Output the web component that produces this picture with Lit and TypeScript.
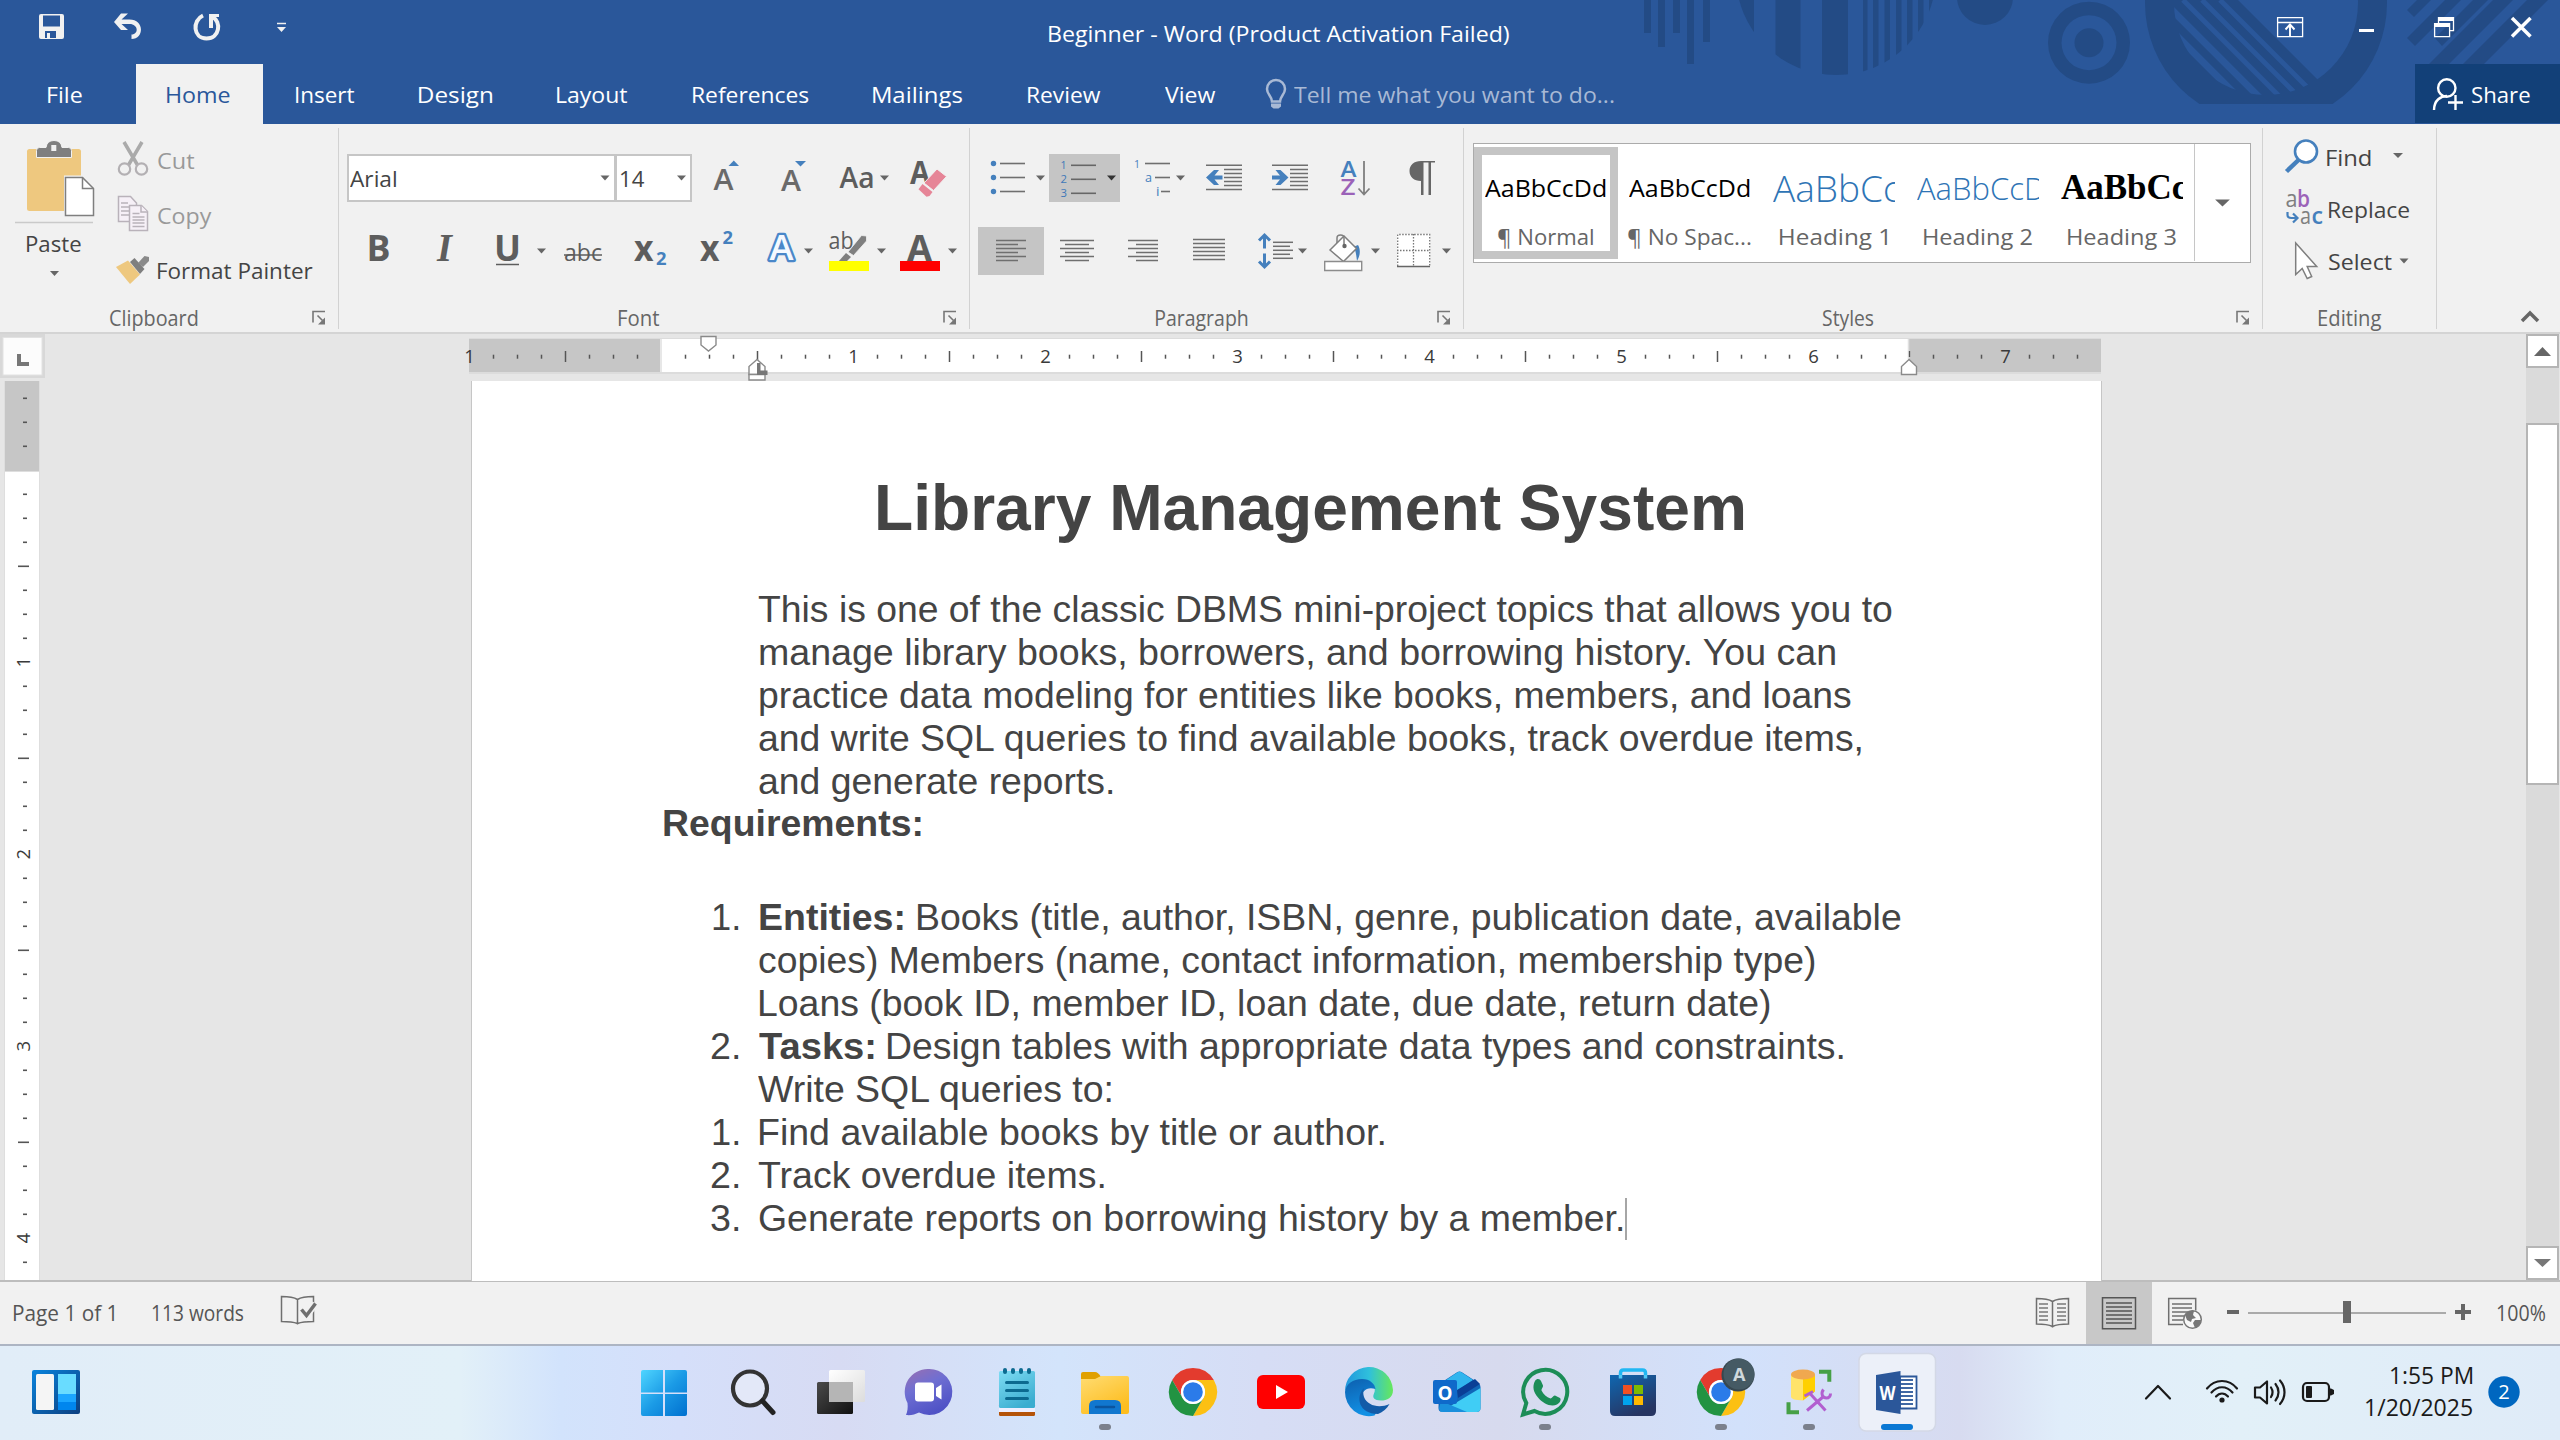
import { LitElement, html, svg, css } from "lit";
import { customElement, property } from "lit/decorators.js";

/* Text whose inked width is fixed, whatever the metrics of the face in use. */
@customElement("fit-text")
class FitText extends LitElement {
  @property({ type: Number }) w = 0;
  @property({ type: Number }) gap = 0;
  @property() text = "";

  static styles = css`
    :host { display: inline-block; white-space: pre; flex: none; }
    .ink { display: inline-block; position: relative; top: var(--drop, 1px); transform-origin: 0 50%; }
  `;

  updated() {
    const span = this.renderRoot.querySelector(".ink") as HTMLElement;
    const cs = getComputedStyle(span);
    const ctx = document.createElement("canvas").getContext("2d")!;
    ctx.font = `${cs.fontStyle} ${cs.fontWeight} ${cs.fontSize} ${cs.fontFamily}`;
    const m = ctx.measureText(this.text);
    const ink = m.actualBoundingBoxRight + m.actualBoundingBoxLeft;
    const k = ink > 0 ? this.w / ink : 1;
    span.style.transform = `translateX(${m.actualBoundingBoxLeft * k}px) scaleX(${k})`;
    this.style.width = `${this.w}px`;
    this.style.marginLeft = `${this.gap}px`;
  }

  render() {
    return html`<span class="ink">${this.text}</span>`;
  }
}

const fit = (text: string, w: number, gap = 0, cls = "") =>
  html`<fit-text class=${cls} .text=${text} .w=${w} .gap=${gap}></fit-text>`;

/* An SVG tile that shows the window region x,y,w,h; drawings use window coordinates. */
const tile = (x: number, y: number, w: number, h: number, body: unknown, cls = "") =>
  html`<svg class="tile ${cls}" width=${w} height=${h} viewBox="${x} ${y} ${w} ${h}">${body}</svg>`;

const tri = (x: number, y: number, w = 9, h = 5, c = "#666") =>
  svg`<path d="M${x} ${y}h${w}l${-w / 2} ${h}z" fill=${c} />`;

const glyph = (s: string, x: number, base: number, size: number, w: number, c = "#5d5d5d", cls = "") =>
  svg`<text class=${cls} x=${x} y=${base} font-size=${size} textLength=${w} lengthAdjust="spacingAndGlyphs" fill=${c}>${s}</text>`;

const lines = (segs: number[][], c = "#777", sw = 2) =>
  segs.map(([x1, x2, y]) => svg`<path d="M${x1} ${y}H${x2}" stroke=${c} stroke-width=${sw} />`);

const BLUE = "#4580bd";

const launcher = html`<svg class="tile" width="30" height="23" viewBox="308 305.5 30 23">
  <path d="M313 322v-11h12" fill="none" stroke="#777" stroke-width="1.6" />
  <path d="M317.5 315l5 5" stroke="#777" stroke-width="1.6" /><path d="M325 317v7h-7z" fill="#777" />
</svg>`;

const chrome = (cx: number, cy: number) => svg`<g transform="translate(${cx} ${cy})">
  <path d="M-20.8-12A24 24 0 0 1 20.8-12H0A12 12 0 0 0-10.4 6z" fill="#e33b2e" />
  <path d="M20.8-12A24 24 0 0 1 0 24L10.4 6A12 12 0 0 0 0-12z" fill="#fcc013" />
  <path d="M0 24A24 24 0 0 1-20.8-12L-10.4 6A12 12 0 0 0 10.4 6z" fill="#229342" />
  <circle r="12" fill="#fff" /><circle r="9.8" fill="#2b7be9" /></g>`;

const dot = (cx: number) => svg`<rect x=${cx - 6} y="1424" width="12" height="6" rx="3" fill="#7b808c" />`;

const samples = [
  { cls: "s-body", label: "¶ Normal", w: 95, sample: "AaBbCcDd" },
  { cls: "s-body", label: "¶ No Spac...", w: 123, sample: "AaBbCcDd" },
  { cls: "s-h1", label: "Heading 1", w: 107, sample: "AaBbCc" },
  { cls: "s-h2", label: "Heading 2", w: 108, sample: "AaBbCcD" },
  { cls: "s-h3", label: "Heading 3", w: 108, sample: "AaBbCc" },
];

const tabs: [string, number, number][] = [
  ["Insert", 58.5, 33], ["Design", 73, 65], ["Layout", 70.5, 65], ["References", 115.5, 65],
  ["Mailings", 89, 65], ["Review", 73, 65.5], ["View", 51, 64.5],
];

type Run = [string, number, number, boolean?];
const intro: Run[] = [
  ["This is one of the classic DBMS mini-project topics that allows you to", 1134, 758],
  ["manage library books, borrowers, and borrowing history. You can", 1076, 759.5],
  ["practice data modeling for entities like books, members, and loans", 1091, 760],
  ["and write SQL queries to find available books, track overdue items,", 1104, 759],
  ["and generate reports.", 353, 758.5],
];
const list: { n?: string; runs: Run[]; caret?: boolean }[] = [
  { n: "1.", runs: [["Entities:", 142.5, 759.5, true], ["Books (title, author, ISBN, genre, publication date, available", 983, 917.5]] },
  { runs: [["copies) Members (name, contact information, membership type)", 1056, 759]] },
  { runs: [["Loans (book ID, member ID, loan date, due date, return date)", 1010, 760]] },
  { n: "2.", runs: [["Tasks:", 114.5, 758.5, true], ["Design tables with appropriate data types and constraints.", 954.5, 888]] },
  { runs: [["Write SQL queries to:", 354, 757.5]] },
  { n: "1.", runs: [["Find available books by title or author.", 623.5, 760]] },
  { n: "2.", runs: [["Track overdue items.", 345.5, 757.5]] },
  { n: "3.", runs: [["Generate reports on borrowing history by a member.", 863, 758.5]], caret: true },
];

@customElement("app-root")
class AppRoot extends LitElement {
  static styles = css`
    :host { display: block; width: 2560px; height: 1440px; overflow: hidden; background: #e6e6e6;
      font-family: "Open Sans", "Noto Sans", sans-serif; font-size: 22.5px; color: #444; }
    * { box-sizing: border-box; }
    .tile { display: block; flex: none; }
    .tile text { font-family: "Open Sans", "Noto Sans", sans-serif; }
    .tile .b { font-weight: 700; }
    .tile .sb { font-weight: 600; }
    .tile .it { font-family: "Liberation Serif", serif; font-style: italic; font-weight: 700; }
    .grow { flex: 1; }

    .header { position: relative; height: 124px; background: #2a579a; color: #fff; }
    .decor { position: absolute; right: 0; top: 0; }
    .title-row { position: relative; display: flex; height: 64px; }
    .title-row fit-text { line-height: 66px; }
    .tab-row { position: relative; display: flex; height: 60px; line-height: 60px; }
    .tab-home { width: 127px; height: 60px; background: #f1f1f1; color: #2a579a; margin-left: 54px; }
    .tell { color: #a8b9d5; }
    .share { display: flex; width: 145px; height: 59px; background: #124078; }

    .ribbon { display: flex; height: 210px; background: #f1f1f1; border-bottom: 2px solid #d4d4d4; }
    .group { display: flex; flex-direction: column; height: 201px; margin-top: 4px; border-right: 1.5px solid #d2d2d2; }
    .g-clip { width: 339px; } .g-font { width: 631px; } .g-para { width: 494px; }
    .g-styles { width: 799px; } .g-edit { width: 174px; }
    .body { height: 178px; }
    .foot { display: flex; height: 23px; line-height: 23px; font-size: 21px; color: #666; }
    .foot .name { flex: 1; text-align: center; }
    .clip-body { display: flex; }
    .paste { width: 108px; }
    .paste-name { display: block; height: 36px; line-height: 36px; }
    .clip-list { padding-top: 4px; line-height: 55px; }
    .cmd { display: flex; }
    .row { display: flex; height: 66px; }
    .dim { color: #999; }
    .rows { padding-top: 17px; display: flex; flex-direction: column; gap: 7px; }
    .font-rows { padding-left: 8px; }
    .combo { display: flex; align-items: center; height: 48px; margin-top: 9px; background: #fff; border: 2px solid #c6c6c6; line-height: 44px; }
    .c-name { width: 269px; } .c-size { width: 76px; border-left: 1px solid #c6c6c6; }

    .gallery { display: flex; width: 778px; height: 120px; margin: 15px 0 0 9px; background: #fff; border: 1.5px solid #ababab; }
    .card { width: 144px; height: 112px; margin-top: 3px; border: 8px solid transparent; padding-left: 3px; }
    .card.on { border-color: #c5c5c5; }
    .sample { height: 66px; line-height: 66px; width: 122px; overflow: hidden; white-space: nowrap; color: #000; font-size: 24px; --drop: 0px; }
    .s-h1 { font-size: 37px; font-weight: 300; color: #2e74b5; }
    .s-h2 { font-size: 31px; font-weight: 300; color: #2e74b5; }
    .s-h3 { font-family: "Liberation Serif", serif; font-weight: 700; font-size: 35px; }
    .style-name { height: 30px; line-height: 30px; text-align: center; color: #666; margin-left: -5px; }
    .more { border-left: 1.5px solid #c6c6c6; }
    .edit-list { padding-top: 3px; line-height: 52px; }
    .tail { display: flex; flex: 1; justify-content: flex-end; align-items: flex-end; }

    .work { display: flex; height: 946px; background: #e6e6e6; }
    .left { width: 45px; }
    .main { width: 2481px; }
    .page { width: 1631px; height: 900px; margin-left: 426px; background: #fff; border: solid #c6c6c6; border-width: 0 1.5px;
      font-family: "Liberation Sans", Arial, sans-serif; font-size: 37.33px; line-height: 43px; padding-top: 90px; color: #444; }
    .h { font-size: 64px; font-weight: 700; line-height: 74px; height: 74px; margin-bottom: 42px; --drop: 0px; }
    .ln { display: flex; height: 43px; }
    .bold { font-weight: 700; }
    .req { margin-bottom: 50px; --drop: 0px; }
    .caret { width: 2px; height: 42px; margin: 2px 0 0 3px; background: #a6a6a6; }

    .scroll { display: flex; flex-direction: column; width: 34px; background: #dadada; border-right: 1px solid #e6e6e6; }
    .sb { background: #fff; border: 2px solid #b5b5b5; height: 34px; }
    .sb-thumb { height: 362px; margin-top: 55px; }

    .status { display: flex; height: 64px; background: #f1f1f1; border-top: 2px solid #bdbdbd; line-height: 63px; font-size: 21px; color: #555; --drop: 0px; }
    .view-on { background: #c8c8c8; }
    .edge { width: 15px; }
    .taskbar { display: flex; height: 96px; border-top: 2px solid #adb5c3;
      background: linear-gradient(90deg, #e1edf8 0, #e2f0f8 460px, #d2e3fc 560px, #d5dffa 680px, #d7dbf3 840px, #d3e4fb 1060px, #d6ddf5 1260px, #d7daee 1500px, #d2e1fb 1740px, #d7dbf0 1960px, #e0edfa 2060px, #e2f0f8 2240px, #dfebf8 2560px); }
    .clock { width: 106px; padding-top: 13px; line-height: 32px; font-size: 23px; color: #1a1a1a; height: 80px; --drop: 0px; }
    .clock-line { display: flex; justify-content: flex-end; height: 32px; }
  `;

  header() {
    const D = "#234b85";
    return html`<div class="header">
      <svg class="decor" width="940" height="124" viewBox="1620 0 940 124" fill=${D}>
        <path d="M1644 0h7v33h-7zM1658 0h7v47h-7zM1673 0h7v33h-7zM1687 0h7v64h-7zM1703 0h7v42h-7z" />
        <clipPath id="c1"><circle cx="1836" cy="-25" r="100" /></clipPath>
        <g clip-path="url(#c1)">
          <path d="M1720 0h34v60h-34zM1775.5 0h25v80h-25zM1822 0h26v80h-26zM1863 0h4.500v80h-4.500zM1873 0h5.500v80h-5.500zM1884.500 0h5.500v80h-5.500zM1896 0h5.500v80h-5.500zM1907 0h5.500v80h-5.500zM1918 0h5.500v80h-5.500zM1929 0h6v80h-6z" />
        </g>
        <circle cx="1985" cy="-3" r="28" />
        <path fill-rule="evenodd" d="M2048 42.700a41 41 0 1 0 82 0a41 41 0 1 0-82 0M2061.500 42.700a27.500 27.500 0 1 0 55 0a27.500 27.500 0 1 0-55 0" />
        <circle cx="2089" cy="42.700" r="14.500" />
        <clipPath id="c2"><path d="M2130 0h270v104h-270z" /></clipPath>
        <clipPath id="c3"><circle cx="2266" cy="3" r="92" /></clipPath>
        <g clip-path="url(#c2)">
          <circle cx="2266" cy="3" r="121" />
          <g clip-path="url(#c3)">
            <path d="M2238 0L2362 124H2400V0z" fill="#2a579a" />
            <path d="M2220 0l124 124M2202 0l124 124M2183 0l124 124" stroke="#2a579a" stroke-width="5" fill="none" />
            <path d="M2162 0l124 124M2141 0l124 124" stroke="#2a579a" stroke-width="7" fill="none" />
          </g>
        </g>
        <path d="M2407 10l10-10h14l-17 17zM2407 38l38-38h16l-46 46zM2435 38l38-38h15l-46 46zM2429 64l64-64h20l-64 64zM2463 64l64-64h21l-64 64z" />
      </svg>
      <div class="title-row">
        ${tile(0, 0, 1049, 64, svg`
          <path fill="#f1f1f1" fill-rule="evenodd" d="M41 14h21a2 2 0 0 1 2 2v21a2 2 0 0 1-2 2H41a2 2 0 0 1-2-2V16a2 2 0 0 1 2-2zM43 15.500v11h17v-11zM45 31v7h2v-5h3v5h6v-7z" />
          <path d="M121 13.500h7l-6.500 6h8c15 0 15 19.500 2 19.500v-4.500c7.500 0 7-10.500-2-10.500h-8l6.500 6h-7l-7-8z" fill="#f1f1f1" />
          <path d="M203 15.500c-11 5-10 23 3.500 23s15-17 6-21.500" fill="none" stroke="#f1f1f1" stroke-width="4" />
          <path d="M209 14h10v3h-6v11h-4z" fill="#f1f1f1" />
          <path d="M277 23.500h9" stroke="#f1f1f1" stroke-width="1.500" />${tri(277, 27, 9, 5, "#f1f1f1")}`)}
        ${fit("Beginner - Word (Product Activation Failed)", 460, 0.2)}
        <span class="grow"></span>
        ${tile(2260, 0, 300, 64, svg`
          <g fill="none" stroke="#fff" stroke-width="1.300"><path d="M2277.600 17.600h25v19h-25zM2277.600 22.500h25" /><path d="M2290 36V25M2285.500 29.500l4.500-5 4.500 5" stroke-width="1.900" />
          <path d="M2434.600 23.600h15v13h-15zM2438.500 23v-5.400h15v13h-3.500" /></g>
          <path d="M2359 29h15v3h-15zM2434 23h16v4h-16zM2438 17h16v4h-16z" fill="#fff" />
          <path d="M2512 18l18.500 18.500M2530.500 18L2512 36.500" stroke="#fff" stroke-width="3.500" />`)}
      </div>
      <div class="tab-row">
        ${fit("File", 34, 47.5)}
        <div class="tab-home">${fit("Home", 63, 31.5)}</div>
        ${tabs.map(([t, w, g]) => fit(t, w, g))}
        ${tile(1215, 64, 79, 60, svg`
          <path d="M1271 101.500c0-5-5-7-5-12.500a9 9 0 0 1 18 0c0 5.500-5 7.500-5 12.500z" fill="none" stroke="#a8b9d5" stroke-width="2.500" />
          <path d="M1270 103.500h10v3l-2.500 2h-5l-2.500-2z" fill="#a8b9d5" />`)}
        ${fit("Tell me what you want to do...", 320, -1, "tell")}
        <span class="grow"></span>
        <div class="share">
          ${tile(2415, 64, 57, 59, svg`<g fill="none" stroke="#fff" stroke-width="2.400">
            <circle cx="2446.800" cy="88" r="8.700" /><path d="M2434 110c0-10 7-14 13-14M2455.500 95v15M2448 102.500h15" /></g>`)}
          ${fit("Share", 58, 0)}
        </div>
      </div>
    </div>`;
  }

  clipboard() {
    return html`<div class="group g-clip">
      <div class="body clip-body">
        <div class="paste">
          ${tile(0, 128, 108, 97, svg`
            <rect x="27" y="149" width="54" height="62" rx="2.500" fill="#eec87f" />
            <path d="M36.500 157.500v-7q0-3 3-3h6.500q1-7 8-7t8 7h6.500q3 0 3 3v7z" fill="#7f7f7f" stroke="#f1f1f1" />
            <rect x="51.300" y="145" width="5" height="6" fill="#f1f1f1" />
            <path d="M64 175.500h20l11 12.500v29.500H64z" fill="#f1f1f1" /><path d="M65.500 177.500h17l11 11v27h-28z" fill="#fff" stroke="#7f7f7f" stroke-width="1.500" />
            <path d="M82.500 177.500v11h11" fill="none" stroke="#7f7f7f" stroke-width="1.500" />
            <path d="M15 222.500h78" stroke="#cacaca" stroke-width="1.500" />`)}
          <span class="paste-name">${fit("Paste", 54, 27)}</span>
          ${tile(0, 261, 108, 20, tri(50, 271))}
        </div>
        <div class="clip-list">
          ${this.btn(tile(108, 132, 49, 55, svg`
            <path d="M124 142l13.500 23M142 142l-13.500 23" stroke="#aaa" stroke-width="3.500" />
            <g fill="none" stroke="#b3b0b3" stroke-width="2.200"><circle cx="124.500" cy="169" r="5.700" /><circle cx="141.500" cy="169" r="5.700" /></g>`), "Cut", 36.5, "dim")}
          ${this.btn(tile(108, 187, 49, 55, svg`
            <g fill="#f6f0f7" stroke="#b9b2ba" stroke-width="1.500"><path d="M118.500 196.500h12l6 6.500v18.500h-18z" />
            <path d="M121 203h7M121 207h8M121 211h8M121 215h8" /><path d="M129.500 205.500h12l6 6v19h-18z" /><path d="M141 205.500v6.500h6.500M132.500 213.500h7M132.500 217h12M132.500 220h12M132.500 223h12M132.500 226.500h12" /></g>`), "Copy", 54, "dim")}
          ${this.btn(tile(108, 242, 49, 55, svg`
            <path d="M116 267l12-6.500 12 14-10 9.500z" fill="#eec87f" /><path d="M130 262l4.500-4 10 11-4.500 5z" fill="#7f7f7f" />
            <path d="M138 263l6.500-7 4.500 1v4l-6 6z" fill="#8a8a8a" />`), "Format Painter", 154.5, "")}
        </div>
      </div>
      <div class="foot"><span class="name">${fit("Clipboard", 88)}</span>${launcher}</div>
    </div>`;
  }

  btn(icon: unknown, text: string, w: number, cls: string) {
    return html`<div class="cmd">${icon}${fit(text, w, 1, cls)}</div>`;
  }

  font() {
    return html`<div class="group g-font">
      <div class="body rows font-rows">
        <div class="row">
          <div class="combo c-name">${fit("Arial", 46, 1)}<span class="grow"></span>${tile(596, 160, 18, 36, tri(600.5, 175.5))}</div>
          <div class="combo c-size">${fit("14", 23.5, 3.5)}<span class="grow"></span>${tile(670, 160, 20, 36, tri(677, 175.5))}</div>
          ${tile(692, 145, 73, 66, svg`${glyph("A", 713.5, 190, 29, 20, "#6a6a6a", "sb")}<path d="M728.500 166h10.500l-5.200-5.500z" fill=${BLUE} />`)}
          ${tile(765, 145, 60, 66, svg`${glyph("A", 781, 191, 28, 20, "#6a6a6a", "sb")}${tri(795, 161, 11, 5.5, BLUE)}`)}
          ${tile(825, 145, 75, 66, svg`${glyph("Aa", 839.5, 188, 29, 35, "#5d5d5d", "sb")}${tri(880, 175.5)}`)}
          ${tile(900, 145, 60, 66, svg`${glyph("A", 910, 184, 33, 20, "#5d5d5d", "b")}
            <path d="M937 169l9.500 7.500-13 14-9.500-7.500z" fill="#e68597" stroke="#f1f1f1" /><path d="M922.500 184l10 8-3 4-3 .7-8-7.500z" fill="#e68597" />`)}
        </div>
        <div class="row">
          ${tile(347, 218, 65, 66, glyph("B", 366.5, 261, 36, 24, "#5d5d5d", "b"))}
          ${tile(412, 218, 63, 66, glyph("I", 437, 261, 39, 15, "#5d5d5d", "it"))}
          ${tile(475, 218, 75, 66, svg`${glyph("U", 494, 260.5, 35, 27, "#5d5d5d", "b")}<path d="M496 264.500h23" stroke="#5d5d5d" stroke-width="1.500" />${tri(537, 248.5)}`)}
          ${tile(550, 218, 68, 66, svg`${glyph("abc", 564, 260.5, 24, 38, "#5d5d5d")}<path d="M564 255h38" stroke="#5d5d5d" stroke-width="1.700" />`)}
          ${tile(618, 218, 67, 66, svg`${glyph("x", 634, 261, 36, 19.5, "#5d5d5d", "b")}${glyph("2", 656, 265, 17.5, 10.5, BLUE, "b")}`)}
          ${tile(685, 218, 65, 66, svg`${glyph("x", 700, 261, 36, 19.5, "#5d5d5d", "b")}${glyph("2", 722.5, 244, 17, 10.5, BLUE, "b")}`)}
          ${tile(750, 218, 72, 66, svg`<g paint-order="stroke" stroke="#8fbde8" stroke-width="6" stroke-linejoin="round" opacity=".999">
            <g stroke="#4a87c9" stroke-width="4.500">${glyph("A", 769.5, 260, 34, 24, "#f4f9ff", "sb")}</g></g>${tri(804, 248.5)}`)}
          ${tile(822, 218, 70, 66, svg`${glyph("ab", 828.5, 249, 23, 25, "#5d5d5d")}
            <path d="M866.500 236v5l-13 14.500-5.500-3.500 13.500-16.500z" fill="#7f7f7f" stroke="#f1f1f1" stroke-width=".8" /><path d="M846 253l5 4-5 5h-8z" fill="#7f7f7f" />
            <rect x="829" y="261" width="40" height="10" fill="#ff0" />${tri(877, 248.5)}`)}
          ${tile(892, 218, 70, 66, svg`${glyph("A", 907, 261, 36, 25, "#5d5d5d", "b")}<rect x="900" y="261" width="40" height="10" fill="red" />${tri(948, 248.5)}`)}
        </div>
      </div>
      <div class="foot"><span class="name">${fit("Font", 40)}</span>${launcher}</div>
    </div>`;
  }

  paragraph() {
    const rows = (ys: number[], a: number[], b: number[]) => lines(ys.map((y, i) => (i % 2 ? [b[0], b[1], y] : [a[0], a[1], y])), "#6f6f6f", 1.5);
    const ys = [240.5, 244.5, 248.5, 252.5, 256.5, 260.5];
    const indent = (x: number, sx: number) => lines([[x, x + 36, 165.3], [sx, x + 36, 169.5], [sx, x + 36, 173.5], [sx, x + 36, 177.5], [sx, x + 36, 181.5], [sx, x + 36, 185.5], [x, x + 36, 189.5]], "#6f6f6f", 1.5);
    return html`<div class="group g-para">
      <div class="body rows">
        <div class="row">
          ${tile(970, 145, 79, 66, svg`${[163.5, 177.5, 191.5].map((y) => svg`<circle cx="993.500" cy=${y} r="2.700" fill=${BLUE} />`)}
            ${lines([[1000, 1025, 163.5], [1000, 1025, 177.5], [1000, 1025, 191.5]], "#6f6f6f", 1.6)}${tri(1036, 175.5)}`)}
          ${tile(1049, 145, 71, 66, svg`<rect x="1049" y="154" width="71" height="48" fill="#c5c5c5" />
            ${glyph("1", 1060.5, 169, 10.5, 6, "#3f78b8")}${glyph("2", 1060.5, 183, 10.5, 6.5, "#3f78b8")}${glyph("3", 1060.5, 197, 10.5, 6.5, "#3f78b8")}
            ${lines([[1071, 1096, 165.3], [1071, 1096, 179.3], [1071, 1096, 193.3]], "#666", 1.6)}${tri(1107, 175.5, 9, 5, "#333")}`)}
          ${tile(1120, 145, 70, 66, svg`${glyph("1", 1134, 168, 10.5, 6, BLUE)}${glyph("a", 1145, 182, 12, 7, BLUE)}${glyph("i", 1156, 196, 13, 3.5, BLUE)}
            ${lines([[1145, 1170, 163.5], [1155, 1170, 177.5], [1161, 1170, 191.5]], "#6f6f6f", 1.6)}${tri(1176, 175.5)}`)}
          ${tile(1190, 145, 67, 66, svg`${indent(1206, 1224)}<path d="M1206 177.500l8-7.500h5l-4.500 5.500h8v4h-8l4.500 5.500h-5z" fill=${BLUE} />`)}
          ${tile(1257, 145, 68, 66, svg`${indent(1272, 1290)}<path d="M1288.500 177.500l-8-7.500h-5l4.500 5.500h-8v4h8l-4.500 5.500h5z" fill=${BLUE} />`)}
          ${tile(1325, 145, 65, 66, svg`${glyph("A", 1340.5, 177, 22, 16, BLUE, "sb")}${glyph("Z", 1340.5, 195, 21, 15, "#9b62b8", "sb")}
            <path d="M1364 161v33M1358.500 188.500l5.500 6 5.500-6" fill="none" stroke="#7f7f7f" stroke-width="1.800" />`)}
          ${tile(1390, 145, 60, 66, svg`<path d="M1435 161v1.500h-4V195h-2.500v-32.500h-5V195h-2.500v-14c-7 0-11.500-4-11.500-10s4.500-10 11.500-10z" fill="#666" />`)}
        </div>
        <div class="row">
          ${tile(970, 218, 74, 66, svg`<rect x="978" y="227" width="66" height="48" fill="#c5c5c5" />${rows(ys, [996, 1026], [996, 1018])}`)}
          ${tile(1044, 218, 66, 66, rows(ys, [1060, 1094], [1065, 1089]))}
          ${tile(1110, 218, 66, 66, rows(ys, [1128, 1158], [1136, 1158]))}
          ${tile(1176, 218, 66, 66, rows(ys.map((y) => y - 1), [1193, 1225], [1193, 1225]))}
          ${tile(1242, 218, 70, 66, svg`<path d="M1264.500 236v12.500M1264.500 253.500V266M1259 240.500l5.500-5.500 5.500 5.500M1259 261.500l5.500 5.500 5.500-5.500" fill="none" stroke=${BLUE} stroke-width="3" />
            ${rows([242.3, 246.3, 250.3, 254.3, 258.3], [1273, 1293], [1273, 1290])}${tri(1298, 248.5)}`)}
          ${tile(1312, 218, 74, 66, svg`<path d="M1353 247l5-2c3 5 2 11-1 16-1-7-1-11-4-14z" fill=${BLUE} /><path d="M1330 250l14-14 12.500 12.500-13 13z" fill="#fff" stroke="#7f7f7f" stroke-width="1.500" />
            <path d="M1337 243v-5c0-4 7-4 7 0v8" fill="none" stroke="#7f7f7f" stroke-width="1.500" /><circle cx="1344.500" cy="246" r="2.200" fill="#666" />
            <path d="M1324.700 261.500h37v9h-37z" fill="#fff" stroke="#8c8c8c" stroke-width="1.400" />${tri(1371, 248.5)}`)}
          ${tile(1386, 218, 70, 66, svg`<path d="M1397 234h33v33h-33z" fill="#fff" /><path d="M1397.700 266V234.500h32V266M1413.500 234v32M1397 250.500h33" fill="none" stroke="#777" stroke-width="1.300" stroke-dasharray="1.500 1.500" />
            <path d="M1397 266.500h33" stroke="#666" stroke-width="1.700" />${tri(1442, 248.5)}`)}
        </div>
      </div>
      <div class="foot"><span class="name">${fit("Paragraph", 92)}</span>${launcher}</div>
    </div>`;
  }

  styleGroup() {
    return html`<div class="group g-styles">
      <div class="body">
        <div class="gallery">
          ${samples.map((s, i) => html`<div class="card ${i === 0 ? "on" : ""}">
            <div class="sample ${s.cls}">${i < 2 ? fit(s.sample, 120.5, -0.5) : s.sample}</div>
            <div class="style-name">${fit(s.label, s.w)}</div>
          </div>`)}
          ${tile(2195, 144, 55, 117, tri(2215.5, 199.5, 15, 7, "#666"), "more")}
        </div>
      </div>
      <div class="foot"><span class="name">${fit("Styles", 51)}</span>${launcher}</div>
    </div>`;
  }

  editing() {
    return html`<div class="group g-edit">
      <div class="body edit-list">
        <div class="cmd">${tile(2263, 131, 64, 52, svg`<circle cx="2306" cy="151.500" r="11" fill="#fff" stroke=${BLUE} stroke-width="2.600" /><path d="M2298.500 160l-12 11.500" stroke=${BLUE} stroke-width="4.500" />`)}
          ${fit("Find", 43.5, 0)}${tile(2371, 131, 50, 52, tri(2393, 153, 10, 5))}</div>
        <div class="cmd">${tile(2263, 183, 64, 52, svg`${glyph("a", 2285.5, 207, 23, 12, "#7f7f7f")}${glyph("b", 2297, 207, 23, 13, "#9b62b8", "sb")}${glyph("a", 2300, 223.5, 23, 11, "#7f7f7f")}${glyph("c", 2311.5, 223.5, 23, 11.5, BLUE, "sb")}
            <path d="M2287.500 212v3q0 3 4 3h5M2293 213.500l4.500 4.500-4.500 4.500" fill="none" stroke=${BLUE} stroke-width="2.200" />`)}
          ${fit("Replace", 80.5, 2)}</div>
        <div class="cmd">${tile(2263, 235, 64, 52, svg`<path d="M2295.700 243v31.500l6.500-6 5 10 4.500-2-4.500-10h9.500z" fill="#fff" stroke="#7f7f7f" stroke-width="1.500" />`)}
          ${fit("Select", 63, 2)}${tile(2392, 235, 40, 52, tri(2399.5, 258.5))}</div>
      </div>
      <div class="foot"><span class="name">${fit("Editing", 62)}</span></div>
    </div>`;
  }

  rulerH() {
    const z = 661.5;
    const marks = [];
    for (let i = -7; i < 60; i++) {
      if (i === 0 || i % 8 === 0) continue;
      const x = z + i * 24;
      if (i === 52) { marks.push(svg`<path d="M${x} 351v6" stroke="#555" stroke-width="1.300" />`); continue; }
      const half = i % 4 === 0;
      marks.push(svg`<path d="M${x} ${half ? 351 : 354.700}v${half ? 11 : 4}" stroke="#555" stroke-width="1.500" />`);
    }
    return tile(45, 334, 2481, 47, svg`
      <path d="M469 338h1632v36H469z" fill="#dcdcdc" />
      <rect x="469" y="339" width="1632" height="33" fill="#c6c6c6" /><rect x="660" y="339" width="1249" height="33" fill="#fff" />
      <path d="M661 339v33M1908.500 339v20" stroke="#e0e0e0" stroke-width="1.500" />
      ${marks}
      ${[-1, 1, 2, 3, 4, 5, 6, 7].map((n) => svg`<text x=${z + n * 192} y="363" font-size="18.500" text-anchor="middle" fill="#3a3a3a">${Math.abs(n)}</text>`)}
      <g fill="#fff" stroke="#8a8a8a" stroke-width="1.400">
        <path d="M701 336.500h15v8.500l-7.500 6-7.500-6z" /><path d="M757 359.500l-8 7v8h16v-8z" /><path d="M749 374.500h16v5.500h-16z" />
        <path d="M1909 359.500l-7.500 7v8h15v-8z" />
      </g>
      <path d="M757 363h3.500v7.500h7v4.500H757z" fill="#777" />`);
  }

  rulerV() {
    const marks = [];
    for (let i = -3; i < 34; i++) {
      if (i === 0) continue;
      const y = 470.3 + i * 24;
      if (i % 8 === 0) {
        marks.push(svg`<text transform="translate(30 ${y}) rotate(-90)" text-anchor="middle" font-size="18.500" fill="#3a3a3a">${i / 8}</text>`);
      } else {
        const half = i % 4 === 0;
        marks.push(svg`<path d="M${half ? 18 : 23} ${y}h${half ? 11 : 4}" stroke="#555" stroke-width="1.600" />`);
      }
    }
    return tile(0, 334, 45, 946, svg`
      <rect x="0" y="334" width="45" height="44" fill="#d8d8d8" /><rect x="3" y="337.500" width="39" height="37.500" fill="#fcfcfc" stroke="#e2e2e2" />
      <path d="M17 354h4v8h8v4H17z" fill="#777" />
      <rect x="4" y="381" width="36" height="899" fill="#dedede" /><rect x="5" y="381" width="34" height="90" fill="#c6c6c6" /><rect x="5" y="472" width="34" height="808" fill="#fff" />
      ${marks}`);
  }

  page() {
    const runs = (rs: Run[], from: number) => {
      let x = from;
      return rs.map(([t, w, at, bold]) => { const g = at - x; x = at + w; return fit(t, w, g, bold ? "bold" : ""); });
    };
    return html`<div class="page">
      <div class="h">${fit("Library Management System", 865, 406)}</div>
      ${intro.map((r) => html`<div class="ln">${runs([r], 472)}</div>`)}
      <div class="ln req">${fit("Requirements:", 256.5, 191.5, "bold")}</div>
      ${list.map((l) => {
        const nx = l.n === "1." ? 712.5 : 710.5;
        const rs: Run[] = l.n ? [[l.n, 737.5 - nx, nx], ...l.runs] : l.runs;
        return html`<div class="ln">${runs(rs, 472)}${l.caret ? html`<span class="caret"></span>` : ""}</div>`;
      })}
    </div>`;
  }

  status() {
    return html`<div class="status">
      ${fit("Page 1 of 1", 100.5, 14.2)}${fit("113 words", 92, 37.6)}
      ${tile(245, 1282, 100, 62, svg`<path d="M282.500 1296.500c6 0 12 .5 16 3v24c-4-1.500-10-2-16-2zM298.500 1299.500c4-2.500 10-3 16-3v25c-6 0-12 .5-16 2z" fill="none" stroke="#6f6f6f" stroke-width="1.500" />
        <path d="M302.500 1309.500l5 6 9-12" fill="none" stroke="#f1f1f1" stroke-width="7" /><path d="M302.500 1309.500l5 6 9-12" fill="none" stroke="#6f6f6f" stroke-width="3.500" />`)}
      <span class="grow"></span>
      ${tile(2020, 1282, 65, 62, svg`<path d="M2035.500 1298.500c6 0 12 .5 16 3v25c-4-2-10-2.500-16-2.500zM2051.500 1301.500c4-2.500 10-3 16-3v25.500c-6 0-12 .5-16 2.500z" fill="none" stroke="#6f6f6f" stroke-width="1.500" />
        ${lines([1304, 1308, 1312, 1316, 1320].flatMap((y) => [[2038, 2047, y], [2056, 2065, y]]), "#6f6f6f", 1.4)}`)}
      ${tile(2085, 1282, 66, 62, svg`<path d="M2101.500 1297.700h33v31h-33z" fill="none" stroke="#555" stroke-width="1.500" />${lines([1303, 1307, 1311, 1315, 1319, 1323].map((y) => [2105, 2131, y]), "#555", 1.5)}`, "view-on")}
      ${tile(2151, 1282, 345, 62, svg`<path d="M2182 1324.500h-14.300v-26h27v12" fill="none" stroke="#6f6f6f" stroke-width="1.500" />${lines([[2171, 2191, 1304], [2171, 2191, 1308], [2171, 2187, 1312], [2171, 2183, 1316], [2171, 2182, 1320]], "#6f6f6f", 1.5)}
        <circle cx="2191.500" cy="1319.500" r="8.800" fill="#f8f8f8" stroke="#777" stroke-width="1.500" />
        <path d="M2184 1315c3-4 6-5 9-4l-1 4 3 3-4 1-1 3-4-2zM2194 1320l6 0c0 4-3 7-6 8l-2-5z" fill="#777" />
        <path d="M2226 1310h12v4h-12zM2342 1301h8v22h-8zM2454 1310h16v4h-16zM2460 1304h4v16h-4z" fill="#666" /><path d="M2247 1313h95M2350 1313h95" stroke="#aaa" stroke-width="2" />`)}
      ${fit("100%", 48.5, 0)}<span class="edge"></span>
    </div>`;
  }

  taskbar() {
    const cells = [
      svg`<g fill="url(#win)"><path d="M643 1370h20v22.500h-22v-20.500q0-2 2-2zM665 1370h20q2 0 2 2v20.500h-22zM641 1394h22v22h-20q-2 0-2-2zM665 1394h22v20q0 2-2 2h-20z" /></g>`,
      svg`<circle cx="750" cy="1388.500" r="17" fill="#e3e8f8" stroke="#333" stroke-width="4.200" /><path d="M762.500 1401l10.500 11.500" stroke="#222" stroke-width="5" stroke-linecap="round" />`,
      svg`<rect x="817" y="1382" width="36" height="32" rx="1.500" fill="url(#tv)" /><rect x="829" y="1370" width="36" height="32" rx="1.500" fill="url(#tw)" /><path d="M829 1382h24v20h-24z" fill="#b5b5b5" />`,
      svg`<path d="M928 1369a23 23 0 1 1-9 43.500c-4 2-8 3-13 2.500 1.500-4 2-7 1.500-12A23 23 0 0 1 928 1369z" fill="url(#chat)" /><rect x="915" y="1382.500" width="19" height="19" rx="3" fill="#fff" /><path d="M936 1388l5.500-3.500v15L936 1396z" fill="#fff" />`,
      svg`<rect x="999" y="1404" width="36" height="12" rx="1.500" fill="#b45309" /><rect x="999" y="1402" width="36" height="10" fill="#eef" /><rect x="999" y="1371" width="36" height="37" rx="1.500" fill="url(#note)" />
        <path d="M1005 1370v2M1013 1370v2M1021 1370v2M1029 1370v2" stroke="#0c6a90" stroke-width="4" stroke-linecap="round" /><path d="M1006.500 1382.500h21M1006.500 1390.500h21M1006.500 1398.500h21" stroke="#0c6a90" stroke-width="3" stroke-linecap="round" />`,
      svg`<path d="M1081 1374q0-2 2-2h12q3 0 6 5l-4 3h-16z" fill="#e0a000" /><path d="M1081 1379h14l6-3h26q2 0 2 2v34q0 2-2 2h-44q-2 0-2-2z" fill="url(#fold)" /><path d="M1089 1414v-8q0-6 6-6h20q6 0 6 6v8z" fill="#1177cf" /><path d="M1096 1407h18" stroke="#0b559f" stroke-width="2.500" stroke-linecap="round" />${dot(1105)}`,
      chrome(1193, 1392),
      svg`<rect x="1257" y="1375" width="48" height="34" rx="6" fill="#f00" /><path d="M1276 1385v14l12-7z" fill="#fff" />`,
      svg`<path d="M1345 1392a24 24 0 0 1 48-2c0 8-6 10.500-12 10.500-7 0-9-3-7-7 3-6-2-13-11-13.500-9 0-16 5-18 12z" fill="url(#edge1)" />
        <path d="M1345 1392c1-8 8-13 17-13 8 0 13 5 13.500 10-9-3-14 3-14 9 0 7 6 13 16 13l-3 4.500A24 24 0 0 1 1345 1392z" fill="url(#edge2)" />
        <path d="M1364 1388c-9 9-5 26 14 26 5-2 9-5.500 11.500-10-10 4.500-22 2-25.500-7-1-3-1-6 0-9z" fill="#135ba8" />`,
      svg`<path d="M1439 1384l18.500-12q2-1 4 0l17 11q2 1.500 2 4v21q0 4-4 4h-34q-4 0-4-4z" fill="#1066b8" /><path d="M1446 1380l12-8q1.500-1 3 0l12 8-16 11z" fill="#31b5ee" /><path d="M1457 1390l18-11 5 5-22 14z" fill="#0a3f96" /><path d="M1480.500 1388v20q0 4-4 4h-36z" fill="#40cdf5" /><path d="M1441 1401l26 11h-24q-4 0-4-4z" fill="#1a8fdc" />
        <rect x="1433" y="1380" width="24" height="24" rx="2" fill="#0f69ca" />${glyph("O", 1437.5, 1399.5, 20, 15, "#fff", "b")}`,
      svg`<path d="M1523 1414.500l3.300-11.500a22 22 0 1 1 8.200 8z" fill="none" stroke="#1c8d57" stroke-width="4" /><path d="M1535 1381c2-3 5-2 6 0l2 4.500c.5 1.500-2 3.500-1.500 5 2 4 5 6.500 9 8 1.500 0 3-3.500 4.500-3l5 2.500c1.500 1.500 0 5-3 6.500-6 3-14-1-19-7-4.500-5-6-11-3-16.500z" fill="#1c8d57" />${dot(1545)}`,
      svg`<path d="M1620.500 1379v-6q0-3 3-3h19q3 0 3 3v6" fill="none" stroke="#21b7f3" stroke-width="3.500" /><path d="M1610 1375h46v36q0 5-5 5h-36q-5 0-5-5z" fill="url(#store)" /><path d="M1620.500 1375v3.500M1645.500 1375v3.500" stroke="#4fc8f5" stroke-width="3.500" />
        <path d="M1623 1385h9v9h-9z" fill="#f25022" /><path d="M1634 1385h9v9h-9z" fill="#7fba00" /><path d="M1623 1396h9v9h-9z" fill="#00a4ef" /><path d="M1634 1396h9v9h-9z" fill="#ffb900" />`,
      svg`${chrome(1721, 1392)}<circle cx="1738" cy="1375" r="16.500" fill="#37474f" /><circle cx="1739" cy="1374" r="15.500" fill="#455a64" />${glyph("A", 1733, 1380.5, 18, 12.5, "#cfd8dc", "b")}${dot(1721)}`,
      svg`<path d="M1791 1375v22q0 3 12 3.500V1378z" fill="#ffe36a" /><path d="M1803 1377v23.500l12-9V1375z" fill="#ffd000" /><ellipse cx="1803" cy="1374.500" rx="12" ry="5" fill="#f0a84f" />
        <path d="M1819 1371.700h10.300v10M1799 1412.300h-10.500v-10" fill="none" stroke="#46a046" stroke-width="4" />
        <g fill="none" stroke="#b25fd0" stroke-width="3"><path d="M1804.500 1396l8.500-4.500M1810 1393.500l15.500 17M1807 1410.500l16.500-14" /><path d="M1823.500 1389.500c-3 4-1 8.500 3 8.500 2.500 0 4-2 4-4.500" /></g>${dot(1809)}`,
      svg`<rect x="1859" y="1353.500" width="76.500" height="77.500" rx="7" fill="#ecf0f9" stroke="#d3d8e6" stroke-width="1.500" /><path d="M1900 1376.500h16.500v32H1900z" fill="#fff" stroke="#2b579a" stroke-width="1.800" />
        ${lines([1380, 1384, 1388, 1392, 1396, 1400, 1404].map((y) => [1900, 1913, y]), "#2b579a", 1.8)}<path d="M1876 1375l24.500-4v43l-24.500-4z" fill="#2b579a" />${glyph("W", 1879.5, 1400, 19, 16, "#fff", "b")}<rect x="1881" y="1424" width="32" height="6" rx="3" fill="#0a78d4" />`,
    ];
    return html`<div class="taskbar">
      ${tile(0, 1346, 620, 94, svg`<defs><linearGradient id="wd" x2="1" y2="1"><stop stop-color="#0a84dd" /><stop offset="1" stop-color="#0c3f80" /></linearGradient></defs>
        <rect x="32" y="1370" width="48" height="44" rx="2" fill="url(#wd)" /><rect x="36" y="1374" width="18" height="36" rx="1.500" fill="#f5f5f5" /><path d="M58 1374h18v20H58z" fill="#69dcff" /><path d="M58 1394h18v8H58z" fill="#1ba6ff" /><path d="M58 1402h18v8H58z" fill="#0086ee" />`)}
      ${cells.map((c, i) => tile(620 + 88 * i, 1346, 88, 94, svg`<defs>
        <linearGradient id="win" gradientUnits="userSpaceOnUse" x1="641" y1="1370" x2="687" y2="1416"><stop stop-color="#4fd5ff" /><stop offset=".5" stop-color="#1b9be6" /><stop offset="1" stop-color="#0070cf" /></linearGradient>
        <linearGradient id="tv" x2="1" y2="1"><stop stop-color="#4a4a4a" /><stop offset="1" stop-color="#111" /></linearGradient>
        <linearGradient id="tw" x2="1" y2="1"><stop stop-color="#fff" /><stop offset="1" stop-color="#dcdcdc" /></linearGradient>
        <linearGradient id="chat" x2=".5" y2="1"><stop stop-color="#9a6fb0" /><stop offset=".45" stop-color="#6f6fd2" /><stop offset="1" stop-color="#4f52c6" /></linearGradient>
        <linearGradient id="note" x2=".6" y2="1"><stop stop-color="#7fdcf4" /><stop offset="1" stop-color="#3badd0" /></linearGradient>
        <linearGradient id="fold" x2=".6" y2="1"><stop stop-color="#ffdc72" /><stop offset="1" stop-color="#fdbd1f" /></linearGradient>
        <linearGradient id="edge1"><stop stop-color="#2196dd" /><stop offset=".5" stop-color="#2fc0dc" /><stop offset="1" stop-color="#67e85a" /></linearGradient>
        <linearGradient id="edge2" x2=".3" y2="1"><stop stop-color="#0d5fae" /><stop offset="1" stop-color="#1190e4" /></linearGradient>
        <linearGradient id="store" x2=".5" y2="1"><stop stop-color="#0f67b1" /><stop offset="1" stop-color="#273562" /></linearGradient>
        </defs>${c}`))}
      <span class="grow"></span>
      ${tile(2130, 1346, 236, 94, svg`<g fill="none" stroke="#1a1a1a" stroke-width="2.200" stroke-linecap="round" stroke-linejoin="round">
        <path d="M2146 1398.500l12-12.500 12 12.500" />
        <path d="M2207 1388.500c8-10 22-10 30 0M2211.500 1392.500c6-7 15-7 21 0M2216 1396.500c3.500-4 8.500-4 12 0" />
        <path d="M2255 1387.500h5l7-6v22l-7-6h-5zM2271 1387.500c2 3 2 6.500 0 9.500M2275.500 1384c4 5 4 11.500 0 16.500M2280 1380.500c6 7 6 16.500 0 23.500" />
        <rect x="2303" y="1383" width="26" height="18" rx="4" /></g>
        <circle cx="2222" cy="1400" r="2.600" fill="#1a1a1a" /><rect x="2306" y="1386" width="6" height="12" rx="1" fill="#1a1a1a" /><path d="M2329 1388.500h2l3 1.500v4l-3 1.500h-2z" fill="#1a1a1a" />`)}
      <div class="clock"><div class="clock-line">${fit("1:55 PM", 81.5)}</div><div class="clock-line">${fit("1/20/2025", 106)}</div></div>
      ${tile(2472, 1346, 88, 94, svg`<circle cx="2504" cy="1392" r="15.700" fill="#0067c0" />${glyph("2", 2498.3, 1399, 20.5, 11.5, "#fff")}`)}
    </div>`;
  }

  render() {
    return html`
      ${this.header()}
      <div class="ribbon">${this.clipboard()}${this.font()}${this.paragraph()}${this.styleGroup()}${this.editing()}
        <div class="tail">${tile(2500, 300, 60, 32, svg`<path d="M2522 321l8-8 8 8" fill="none" stroke="#666" stroke-width="3.500" />`)}</div>
      </div>
      <div class="work">
        <div class="left">${this.rulerV()}</div>
        <div class="main">${this.rulerH()}${this.page()}</div>
        <div class="scroll">
          <div class="sb">${tile(2528, 337, 29, 30, svg`<path d="M2534 357h17l-8.500-9z" fill="#666" />`)}</div>
          <div class="sb sb-thumb"></div><span class="grow"></span>
          <div class="sb">${tile(2528, 1248, 29, 30, tri(2534, 1259, 17, 8, "#777"))}</div>
        </div>
      </div>
      ${this.status()}${this.taskbar()}`;
  }
}
